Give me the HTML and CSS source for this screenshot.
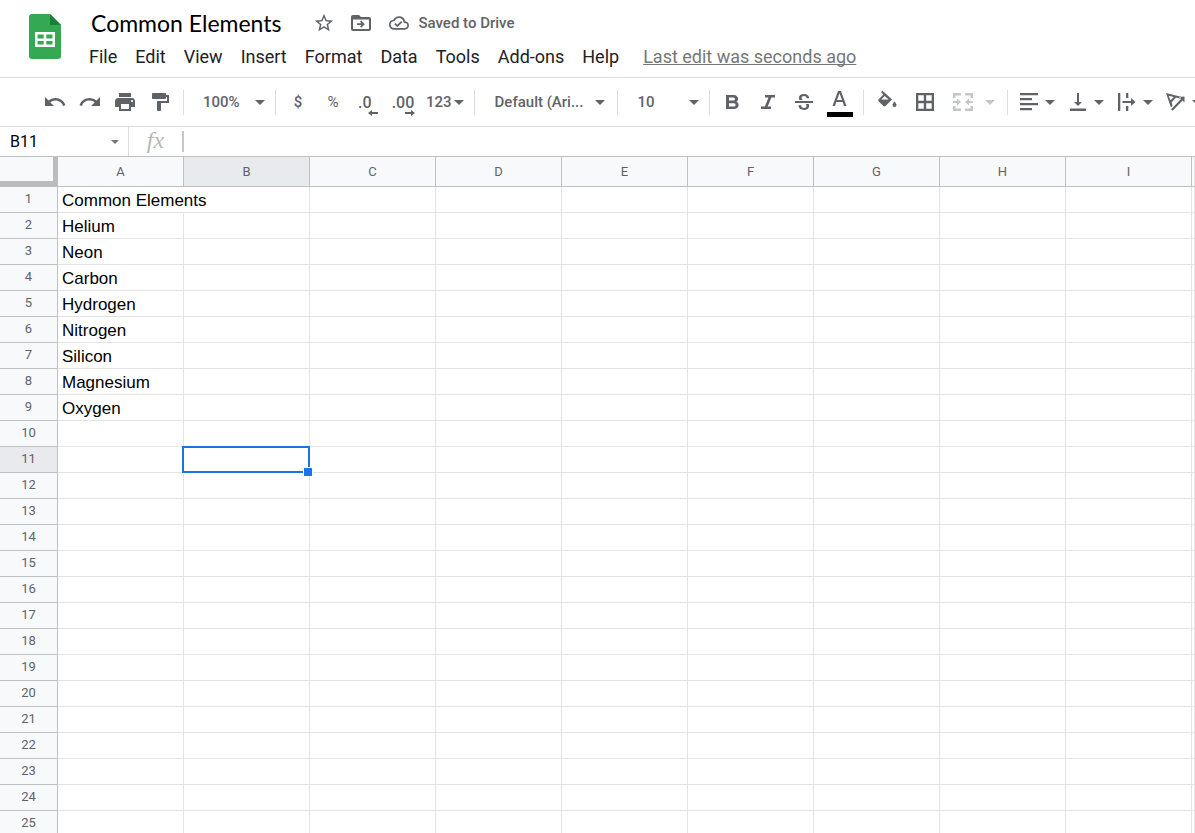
FILE: index.html
```html
<!DOCTYPE html>
<html lang="en">
<head>
<meta charset="utf-8">
<meta name="viewport" content="width=device-width, initial-scale=1">
<title>Common Elements</title>
<link rel="stylesheet" href="styles.css">
</head>
<body>
<div class="app">
  <header class="header">
    <svg class="logo" viewBox="0 0 32 45" aria-hidden="true">
      <path fill="#34a853" d="M3 0h18l11 11v31a3 3 0 0 1-3 3H3a3 3 0 0 1-3-3V3a3 3 0 0 1 3-3z"/>
      <path fill="#188038" d="M21 0l11 11H21z"/>
      <path fill="#fff" fill-rule="evenodd" d="M6 18h20v15H6zM8.500 20.500v4h6.200v-4zM17.300 20.500v4h6.200v-4zM8.500 27v3.500h6.200V27zM17.300 27v3.500h6.200V27z"/>
    </svg>
    <div class="heading">
      <div class="title-row">
        <h1 class="title">Common Elements</h1>
        <button class="icon-btn" aria-label="Star"><svg class="icon star" viewBox="0 0 24 24"><path d="M22 9.240l-7.190-.620L12 2 9.190 8.630 2 9.240l5.460 4.730L5.820 21 12 17.270 18.180 21l-1.630-7.030L22 9.240zM12 15.400l-3.760 2.270 1-4.280-3.320-2.880 4.380-.380L12 6.100l1.710 4.040 4.380.380-3.320 2.880 1 4.280L12 15.400z"/></svg></button>
        <button class="icon-btn" aria-label="Move"><svg class="icon" viewBox="0 0 24 24"><path fill-rule="evenodd" d="M20 6h-8l-2-2H4c-1.100 0-2 .900-2 2v12c0 1.100.900 2 2 2h16c1.100 0 2-.900 2-2V8c0-1.100-.900-2-2-2zM4 8.500h16V18H4z"/><path d="M8 12.300h4.500L11 10.800l1.200-1.200 3.600 3.600-3.600 3.600-1.200-1.200 1.500-1.500H8z"/></svg></button>
        <button class="saved"><svg class="cloud" viewBox="0 0 24 24"><path d="M19.350 10.040A7.490 7.490 0 0 0 12 4C9.110 4 6.600 5.640 5.350 8.040A5.994 5.994 0 0 0 0 14c0 3.310 2.690 6 6 6h13c2.760 0 5-2.240 5-5 0-2.640-2.050-4.780-4.650-4.960zM19 18H6c-2.210 0-4-1.790-4-4 0-2.050 1.530-3.760 3.560-3.970l1.070-.110.500-.950A5.469 5.469 0 0 1 12 6c2.620 0 4.880 1.860 5.390 4.430l.300 1.500 1.530.110A2.980 2.980 0 0 1 22 15c0 1.650-1.350 3-3 3zm-9-3.820l-2.090-2.090L6.500 13.500 10 17l6.010-6.010-1.410-1.410z"/></svg>Saved to Drive</button>
      </div>
      <nav class="menu">
        <button>File</button><button>Edit</button><button>View</button><button>Insert</button><button>Format</button><button>Data</button><button>Tools</button><button>Add-ons</button><button>Help</button>
        <a class="last-edit" href="#">Last edit was seconds ago</a>
      </nav>
    </div>
  </header>

  <div class="toolbar" role="toolbar" aria-label="Formatting">
    <div class="group history">
      <button class="tool" aria-label="Undo"><svg class="icon" viewBox="0 0 24 24"><path d="M12.500 8c-2.650 0-5.050.990-6.900 2.600L2 7v9h9l-3.620-3.620c1.390-1.160 3.160-1.880 5.120-1.880 3.540 0 6.550 2.310 7.600 5.500l2.370-.780C21.080 11.030 17.150 8 12.500 8z"/></svg></button>
      <button class="tool" aria-label="Redo"><svg class="icon" viewBox="0 0 24 24"><path d="M18.400 10.600C16.550 8.990 14.150 8 11.500 8c-4.650 0-8.580 3.030-9.960 7.220L3.900 16a8.002 8.002 0 0 1 7.600-5.500c1.950 0 3.730.720 5.120 1.880L13 16h9V7l-3.600 3.600z"/></svg></button>
      <button class="tool" aria-label="Print"><svg class="icon" viewBox="0 0 24 24"><path d="M19 8H5c-1.660 0-3 1.340-3 3v6h4v4h12v-4h4v-6c0-1.660-1.340-3-3-3zm-3 11H8v-5h8v5zm3-7c-.550 0-1-.450-1-1s.450-1 1-1 1 .450 1 1-.450 1-1 1zm-1-9H6v4h12V3z"/></svg></button>
      <button class="tool" aria-label="Paint format"><svg class="icon" viewBox="0 0 24 24"><path d="M18 4V3c0-.550-.450-1-1-1H5c-.550 0-1 .450-1 1v4c0 .550.450 1 1 1h12c.550 0 1-.450 1-1V6h1v4H9v9c0 .550.450 1 1 1h2c.550 0 1-.450 1-1v-7h8V4h-3z" transform="translate(0 1)"/></svg></button>
    </div>
    <div class="group zoom-group">
      <label class="picker zoom"><select aria-label="Zoom"><option>100%</option></select></label>
    </div>
    <div class="group numbers">
      <button class="tool">$</button>
      <button class="tool thin">%</button>
      <button class="tool decimal less" aria-label="Decrease decimal places">.0<svg class="arrow" viewBox="0 0 10 6"><path d="M4 0v2h6v2H4v2L0 3z"/></svg></button>
      <button class="tool decimal" aria-label="Increase decimal places">.00<svg class="arrow" viewBox="0 0 10 6"><path d="M6 0v2H0v2h6v2l4-3z"/></svg></button>
      <button class="tool caret formats">123</button>
    </div>
    <div class="group font-group">
      <label class="picker font"><select aria-label="Font"><option>Default (Ari...</option></select></label>
    </div>
    <div class="group size-group">
      <label class="picker size"><select aria-label="Font size"><option>10</option></select></label>
    </div>
    <div class="group style-group">
      <button class="tool" aria-label="Bold"><svg class="icon" viewBox="0 0 24 24"><path d="M16.500 11.800c1-.700 1.600-1.800 1.600-2.800 0-2.300-1.800-4-4-4H6v14h8.600c2.300 0 4-1.800 4-3.900 0-1.500-.800-2.700-2.100-3.300zM9 7.500h4.500a1.500 1.500 0 0 1 0 3H9zm5 9H9v-3.200h5a1.600 1.600 0 0 1 0 3.200z"/></svg></button>
      <button class="tool" aria-label="Italic"><svg class="icon" viewBox="0 0 24 24"><path d="M9 5v2.500h3.500l-3.700 9H5V19h10v-2.500h-3.300l3.700-9H19V5z"/></svg></button>
      <button class="tool" aria-label="Strikethrough"><svg class="icon" viewBox="0 0 24 24"><path d="M3 11h18v2H3zM7.500 10c-.500-.800-.600-1.400-.600-2 0-2.500 2.100-4 5.100-4s5.200 1.700 5.200 4.300h-2.700c0-1.400-.900-2.200-2.500-2.200-1.500 0-2.400.700-2.400 1.800 0 .900.500 1.500 2 2.100zM13.500 14h3.200c.4.600.5 1.200.5 1.800 0 2.600-2 4.200-5.200 4.200-3.300 0-5.500-1.800-5.500-4.700h2.700c0 1.700 1.100 2.600 2.900 2.600 1.500 0 2.400-.7 2.400-1.900 0-.9-.3-1.500-1-2z"/></svg></button>
      <button class="tool" aria-label="Text color"><svg class="icon wide" viewBox="0 0 26 30"><path d="M11 4h3L19.500 19H17l-1.300-4H9.300L8 19H5.500zM10 13h5L12.500 6.200z"/><path fill="#000" d="M0 25h26v5H0z"/></svg></button>
    </div>
    <div class="group fill-group">
      <button class="tool" aria-label="Fill color"><svg class="icon" viewBox="0 0 24 24"><path fill-rule="evenodd" d="M7.500.800L6 2.300l2.400 2.300-4.700 4.700c-.6.600-.6 1.500 0 2.100l4.700 4.700c.6.600 1.500.6 2.100 0l6.600-6.700zM9.800 6l3.800 3.600H6.200zM19.500 11.500s-2 2.200-2 3.500a2 2 0 0 0 4 0c0-1.300-2-3.500-2-3.500z"/></svg></button>
      <button class="tool" aria-label="Borders"><svg class="icon" viewBox="0 0 24 24"><path fill-rule="evenodd" d="M3 3h18v18H3zM5.300 5.300v5.500h5.500V5.300zM13.200 5.300v5.500h5.500V5.300zM5.300 13.200v5.500h5.500v-5.500zM13.200 13.200v5.500h5.500v-5.500z"/></svg></button>
      <button class="tool caret merge" aria-label="Merge cells" disabled><svg class="icon" viewBox="0 0 24 24"><path d="M2 3h8v2.500H4.500V8H2zM14 3h8v5h-2.500V5.500H14zM2 16h2.500v2.500H10V21H2zM19.500 16H22v5h-8v-2.500h5.500zM2 11h4V8.500l4 3.500-4 3.500V13H2zM22 11h-4V8.500L14 12l4 3.500V13h4z"/></svg></button>
    </div>
    <div class="group align-group">
      <button class="tool caret" aria-label="Horizontal align"><svg class="icon" viewBox="0 0 24 24"><path d="M3 3h18v2.300H3zM3 8h12v2.300H3zM3 13h18v2.300H3zM3 18h12v2.300H3z"/></svg></button>
      <button class="tool caret" aria-label="Vertical align"><svg class="icon" viewBox="0 0 24 24"><path d="M11 3h2v9h3l-4 4-4-4h3zM4 18.500h16V21H4z"/></svg></button>
      <button class="tool caret" aria-label="Text wrapping"><svg class="icon" viewBox="0 0 24 24"><path d="M3 3h2.300v18H3zM11 3h2.300v5H11zM11 16h2.300v5H11zM7.500 11H16V8l4.500 4-4.500 4v-3H7.500z"/></svg></button>
      <button class="tool caret" aria-label="Text rotation"><svg class="icon" viewBox="0 0 24 24"><path fill-rule="evenodd" d="M2 3l15 3.800-1.200 1.800-3.800-1-4.300 4.700.9 3.500-1.700 1.600zM4.700 5.700l1.800 4.600L9.800 7zM20.500 6.500v6l-2-2-9.800 10.300-1.600-1.500 9.900-10.300-2-2z"/></svg></button>
    </div>
  </div>

  <div class="formula-bar">
    <div class="name-box">
      <input aria-label="Name box" value="B11">
      <button class="name-caret" aria-label="Named ranges"></button>
    </div>
    <label class="fx" for="formula">fx</label>
    <input class="formula" id="formula">
  </div>

  <main class="sheet">
    <table class="grid">
      <colgroup><col class="col-head"><col span="9" class="col-cell"><col></colgroup>
      <thead>
        <tr><td class="corner"></td><th scope="col">A</th><th scope="col" class="active">B</th><th scope="col">C</th><th scope="col">D</th><th scope="col">E</th><th scope="col">F</th><th scope="col">G</th><th scope="col">H</th><th scope="col">I</th><td class="next-col"></td></tr>
      </thead>
      <tbody>
        <tr><th scope="row">1<td class="spill">Common Elements<td><td><td><td><td><td><td><td><td></tr>
        <tr><th scope="row">2<td>Helium<td><td><td><td><td><td><td><td><td></tr>
        <tr><th scope="row">3<td>Neon<td><td><td><td><td><td><td><td><td></tr>
        <tr><th scope="row">4<td>Carbon<td><td><td><td><td><td><td><td><td></tr>
        <tr><th scope="row">5<td>Hydrogen<td><td><td><td><td><td><td><td><td></tr>
        <tr><th scope="row">6<td>Nitrogen<td><td><td><td><td><td><td><td><td></tr>
        <tr><th scope="row">7<td>Silicon<td><td><td><td><td><td><td><td><td></tr>
        <tr><th scope="row">8<td>Magnesium<td><td><td><td><td><td><td><td><td></tr>
        <tr><th scope="row">9<td>Oxygen<td><td><td><td><td><td><td><td><td></tr>
        <tr><th scope="row">10<td><td><td><td><td><td><td><td><td><td></tr>
        <tr><th scope="row" class="active">11<td><td class="selected"><div class="selection"></div><td><td><td><td><td><td><td><td></tr>
        <tr><th scope="row">12<td><td><td><td><td><td><td><td><td><td></tr>
        <tr><th scope="row">13<td><td><td><td><td><td><td><td><td><td></tr>
        <tr><th scope="row">14<td><td><td><td><td><td><td><td><td><td></tr>
        <tr><th scope="row">15<td><td><td><td><td><td><td><td><td><td></tr>
        <tr><th scope="row">16<td><td><td><td><td><td><td><td><td><td></tr>
        <tr><th scope="row">17<td><td><td><td><td><td><td><td><td><td></tr>
        <tr><th scope="row">18<td><td><td><td><td><td><td><td><td><td></tr>
        <tr><th scope="row">19<td><td><td><td><td><td><td><td><td><td></tr>
        <tr><th scope="row">20<td><td><td><td><td><td><td><td><td><td></tr>
        <tr><th scope="row">21<td><td><td><td><td><td><td><td><td><td></tr>
        <tr><th scope="row">22<td><td><td><td><td><td><td><td><td><td></tr>
        <tr><th scope="row">23<td><td><td><td><td><td><td><td><td><td></tr>
        <tr><th scope="row">24<td><td><td><td><td><td><td><td><td><td></tr>
        <tr><th scope="row">25<td><td><td><td><td><td><td><td><td><td></tr>
      </tbody>
    </table>
  </main>
</div>
</body>
</html>
```
FILE: styles.css
```css
* { box-sizing: border-box; }
body {
  margin: 0;
  background: #fff;
  color: #202124;
  font-family: Roboto, "Liberation Sans", sans-serif;
}
button, input, select {
  margin: 0;
  padding: 0;
  border: 0;
  outline: 0;
  background: none;
  color: inherit;
  font: inherit;
}
svg { display: block; flex: none; fill: currentColor; }

.app {
  display: flex;
  flex-direction: column;
  height: 100vh;
  overflow: hidden;
}

/* Header */
.header {
  display: flex;
  flex: none;
  gap: 28px;
  padding: 9px 29px 6px;
  border-bottom: 1px solid #dadce0;
}
.logo { width: 32px; height: 45px; margin-top: 5px; }
.title-row { display: flex; align-items: center; height: 28px; color: #5f6368; }
.title {
  margin: 0 32px 0 2px;
  color: #000;
  font: 400 23px/28px Lato, "Open Sans", sans-serif;
  white-space: nowrap;
}
.icon-btn { margin-right: 14px; }
.icon { width: 24px; height: 24px; }
.star { width: 22px; height: 22px; }
.cloud { width: 20px; height: 20px; }
.saved {
  display: flex;
  align-items: center;
  gap: 9px;
  margin-left: 2px;
  font-size: 15px;
  font-weight: 500;
  white-space: nowrap;
}
.menu {
  display: flex;
  align-items: center;
  gap: 18px;
  height: 34px;
  padding-top: 6px;
  font-size: 18px;
  line-height: 24px;
  white-space: nowrap;
}
.last-edit {
  margin-left: 6px;
  color: #777;
  text-decoration: underline;
  text-decoration-skip-ink: none;
}

/* Toolbar */
.toolbar {
  display: flex;
  flex: none;
  align-items: center;
  height: 49px;
  border-bottom: 1px solid #dadce0;
  color: #5f6368;
  font-size: 15px;
  font-weight: 500;
}
.group {
  display: flex;
  flex: none;
  align-items: center;
  gap: 11px;
  height: 25px;
  border-right: 1px solid #dadce0;
}
.tool {
  display: flex;
  flex: none;
  align-items: center;
  justify-content: center;
  min-width: 24px;
  height: 24px;
}
.thin { font-weight: 400; }
.wide { width: 26px; height: 30px; }
.caret { gap: 4px; }
.caret::after, .picker::after, .name-caret::after {
  content: "";
  border: 5px solid transparent;
  border-top-color: currentColor;
  border-bottom: 0;
}
.picker { display: flex; align-items: center; justify-content: space-between; }
.picker select {
  flex: 1;
  min-width: 0;
  appearance: none;
}
.history { padding: 0 11px 0 43px; }
.zoom-group { padding: 0 10px 0 19px; }
.zoom { width: 62px; }
.numbers { padding: 0 10px; }
.decimal { position: relative; font-size: 16px; }
.less { justify-content: flex-start; padding-left: 2px; }
.arrow {
  position: absolute;
  right: 0;
  bottom: -2px;
  width: 10px;
  height: 6px;
}
.less .arrow { right: 2px; }
.formats { gap: 2px; }
.font-group { padding: 0 12px 0 20px; }
.font { width: 110px; }
.size-group { padding: 0 10px 0 20px; }
.size { width: 61px; }
.style-group { gap: 12px; padding: 0 11px 0 10px; }
.style-group .tool { width: 24px; }
.fill-group { gap: 14px; padding: 0 12px 0 11px; }
.merge { gap: 10px; color: #c4c6c8; }
.align-group { padding-left: 9px; border-right: 0; }

/* Formula bar */
.formula-bar {
  display: flex;
  flex: none;
  align-items: center;
  height: 30px;
  border-bottom: 1px solid #c0c0c0;
}
.name-box {
  display: flex;
  align-items: center;
  align-self: stretch;
  width: 129px;
  padding: 0 9px 0 10px;
  border-right: 1px solid #dadce0;
  color: #000;
  font-size: 16px;
}
.name-box input { flex: 1; min-width: 0; }
.name-caret { display: flex; color: #777; }
.name-caret::after { border-width: 4px 4px 0; }
.fx {
  width: 53px;
  padding-bottom: 4px;
  color: #b8b8b8;
  font: italic 24px/24px "DejaVu Serif", "Liberation Serif", serif;
  font-family: "Liberation Serif", serif;
  text-align: center;
}
.formula {
  flex: 1;
  height: 21px;
  padding-left: 8px;
  border-left: 2px solid #c8c8c8;
  font-size: 16px;
}

/* Sheet */
.sheet { flex: 1; min-height: 0; overflow: hidden; }
.grid {
  width: 100%;
  min-width: 1195px;
  border-spacing: 0;
  table-layout: fixed;
}
.col-head { width: 58px; }
.col-cell { width: 126px; }
.grid td {
  height: 26px;
  padding: 2px 0 0 4px;
  border-right: 1px solid #e2e3e3;
  border-bottom: 1px solid #e2e3e3;
  color: #000;
  font: 17px/22px "Liberation Sans", Arial, sans-serif;
  white-space: nowrap;
}
.grid th {
  padding: 0;
  border-right: 1px solid #c0c0c0;
  border-bottom: 1px solid #c0c0c0;
  background: #f8f9fa;
  color: #5f6368;
  font-size: 13px;
  font-weight: 400;
  line-height: 16px;
}
.grid tbody th { padding-bottom: 2px; }
.grid thead th, .grid thead td { height: 30px; }
.grid th.active { background: #e8eaed; }
.grid .corner {
  border-right: 5px solid #bcbcbc;
  border-bottom: 6px solid #bcbcbc;
  background: #f8f9fa;
}
.grid .next-col { border-bottom-color: #c0c0c0; background: #f8f9fa; }
.grid .spill { border-right-color: transparent; }
.grid .selected { position: relative; }
.selection {
  position: absolute;
  inset: -1px -1px -1px -2px;
  border: 2px solid #1a73e8;
}
.selection::after {
  content: "";
  position: absolute;
  right: -4px;
  bottom: -5px;
  width: 8px;
  height: 8px;
  background: #1a73e8;
  box-shadow: 0 0 0 1px #fff;
}
```
